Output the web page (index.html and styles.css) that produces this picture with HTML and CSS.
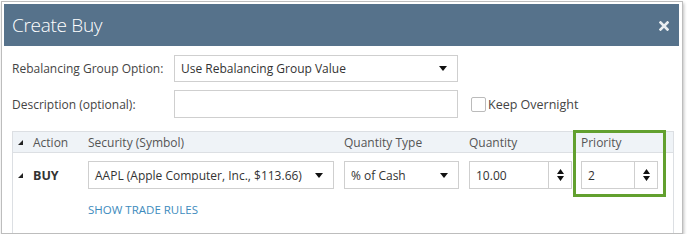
FILE: index.html
```html
<!DOCTYPE html>
<html>
<head>
<meta charset="utf-8">
<link rel="stylesheet" href="styles.css">
</head>
<body>
<div class="frame">
  <div class="titlebar">
    <span class="title">Create Buy</span>
    <svg class="close" width="10" height="10" viewBox="0 0 10 10"><path d="M1.5 1.5L8.5 8.5M8.5 1.5L1.5 8.5" stroke="#e8edf1" stroke-width="2.6" stroke-linecap="square"/></svg>
  </div>
  <div class="form">
    <div class="row">
      <label class="lbl">Rebalancing Group Option:</label>
      <div class="select wide"><span>Use Rebalancing Group Value</span><svg class="caret" width="8" height="5" viewBox="0 0 8 5"><path d="M0 0H8L4 5Z" fill="#111"/></svg></div>
    </div>
    <div class="row">
      <label class="lbl">Description (optional):</label>
      <div class="input wide"></div>
      <span class="check"></span><span class="checklbl">Keep Overnight</span>
    </div>
  </div>
  <div class="table">
    <div class="thead">
      <div class="c1"><svg class="tri" width="5" height="5" viewBox="0 0 5 5"><path d="M5 0V5H0Z" fill="#222"/></svg>Action</div>
      <div class="c2">Security (Symbol)</div>
      <div class="c3">Quantity Type</div>
      <div class="c4">Quantity</div>
      <div class="c5">Priority</div>
    </div>
    <div class="trow">
      <div class="c1 buy"><svg class="tri" width="5" height="5" viewBox="0 0 5 5"><path d="M5 0V5H0Z" fill="#222"/></svg>BUY</div>
      <div class="c2"><div class="select sec"><span>AAPL (Apple Computer, Inc., $113.66)</span><svg class="caret" width="8" height="5" viewBox="0 0 8 5"><path d="M0 0H8L4 5Z" fill="#111"/></svg></div></div>
      <div class="c3"><div class="select qt"><span>% of Cash</span><svg class="caret" width="8" height="5" viewBox="0 0 8 5"><path d="M0 0H8L4 5Z" fill="#111"/></svg></div></div>
      <div class="c4"><div class="spin qty"><span class="val">10.00</span><span class="arrows"><svg width="7" height="12" viewBox="0 0 7 12"><path d="M0 5H7L3.5 0Z M0 7H7L3.5 12Z" fill="#111"/></svg></span></div></div>
      <div class="c5"><div class="spin pri"><span class="val">2</span><span class="arrows"><svg width="7" height="12" viewBox="0 0 7 12"><path d="M0 5H7L3.5 0Z M0 7H7L3.5 12Z" fill="#111"/></svg></span></div></div>
    </div>
    <div class="rules">SHOW TRADE RULES</div>
    <div class="highlight"></div>
  </div>
</div>
</body>
</html>
```

FILE: styles.css
```css
html, body { margin: 0; padding: 0; background: #fff; }
body { font-family: "Open Sans", "Noto Sans", sans-serif; color: #333; }

.frame {
  margin: 1px 0 0 1px;
  width: 675px;
  height: 229px;
  padding: 2px 3px 0 2px;
  border: 1px solid #bdbdbd;
  box-shadow: 1px 2px 3px rgba(0,0,0,0.25);
  background: #fff;
  overflow: hidden;
  display: flex;
  flex-direction: column;
}

.titlebar {
  height: 42px;
  background: #56728b;
  display: flex;
  align-items: center;
  justify-content: space-between;
  padding: 0 10px 0 8px;
  flex-shrink: 0;
}
.title { color: #fff; font-size: 19px; font-weight: 300; letter-spacing: -0.3px; }
.close { margin-top: 2px; }

.form { padding: 9px 0 0 8px; display: flex; flex-direction: column; gap: 8px; }
.row { display: flex; align-items: center; }
.lbl { width: 162px; font-size: 12px; color: #444; }

.select, .input, .spin {
  box-sizing: border-box;
  border: 1px solid #cfcfcf;
  background: #fff;
  height: 28px;
  display: flex;
  align-items: center;
  font-size: 12px;
  color: #333;
  white-space: nowrap;
}
.select { justify-content: space-between; padding: 0 10px 0 6px; }
.wide { width: 284px; }
.row:first-child .wide { height: 27px; }
.caret { flex-shrink: 0; }

.check {
  width: 13px; height: 13px;
  border: 1px solid #bbb; border-radius: 2px;
  margin-left: 13px; margin-right: 2px;
}
.checklbl { font-size: 12.5px; color: #444; }

.table {
  position: relative;
  margin: 13px 0 0 8px;
  width: 660px;
  flex: 1;
  border: 1px solid #dcdfe3;
  border-bottom: none;
}
.thead, .trow { display: flex; }
.thead {
  height: 20px;
  background: #eff3f7;
  border-bottom: 1px solid #dcdfe3;
  align-items: center;
  font-size: 12px;
  color: #555;
}
.c1 { width: 75px; display: flex; align-items: center; padding-left: 5px; box-sizing: border-box; }
.c2 { width: 256px; }
.c3 { width: 125px; }
.c4 { width: 112px; }
.c5 { flex: 1; }
.tri { margin-right: 10px; }
.trow { padding-top: 8px; align-items: center; }
.buy { font-weight: bold; font-size: 12.5px; color: #333; height: 28px; }

.sec { width: 246px; }
.qt { width: 115px; }
.spin { justify-content: space-between; padding-left: 6px; }
.qty { width: 103px; }
.pri { width: 77px; }
.arrows {
  width: 22px; height: 100%;
  border-left: 1px solid #cfcfcf;
  display: flex; align-items: center; justify-content: center;
}

.rules {
  margin: 13px 0 0 75px;
  font-size: 11.5px;
  color: #3d8bbd;
}

.highlight {
  position: absolute;
  left: 560px; top: -2px;
  width: 87px; height: 61px;
  border: 3px solid #62a02f;
}
```
